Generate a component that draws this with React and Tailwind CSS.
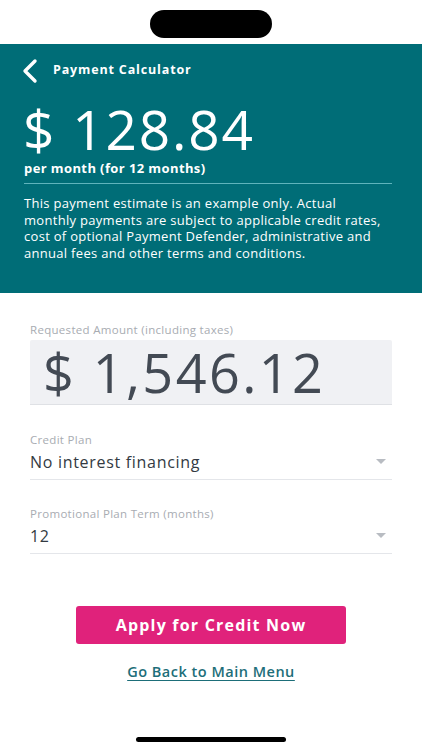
import React from 'react';

function Caret() {
  return (
    <svg width="10" height="6" viewBox="0 0 10 6" className="mr-[6px]">
      <path d="M0 0 L10 0 L5 5 Z" fill="#b8bcc2" />
    </svg>
  );
}

function SelectField({ label, value, mt }) {
  return (
    <div className={mt}>
      <div className="text-[11.5px] text-[#a8acb2] leading-[14px] tracking-[0.3px]">{label}</div>
      <div className="flex items-center justify-between border-b border-[#e4e6ea] h-[33px] pb-[2px]">
        <span className="text-[16px] font-medium text-[#333a42] tracking-[0.7px]">{value}</span>
        <Caret />
      </div>
    </div>
  );
}

export default function App() {
  return (
    <div className="w-[422px] h-[750px] bg-white flex flex-col" style={{ fontFamily: '"Open Sans", sans-serif' }}>
      {/* status area */}
      <div className="h-[44px] flex justify-center pt-[10px]">
        <div className="w-[122px] h-[28px] rounded-full bg-black" />
      </div>

      {/* teal header */}
      <div className="bg-[#006d77] h-[249px] px-[24px] text-white">
        <div className="flex items-center h-[52px] pt-[1px] -ml-[4px]">
          <svg width="20" height="26" viewBox="0 0 20 26" fill="none">
            <path d="M15 3 L5 13 L15 23" stroke="white" strokeWidth="3.4" strokeLinecap="round" strokeLinejoin="round" />
          </svg>
          <span className="ml-[13px] text-[12.5px] font-bold tracking-[0.85px]">Payment Calculator</span>
        </div>
        <div className="text-[55px] leading-[56px] font-normal mt-[5px] -ml-[1px] tracking-[1.8px]">$ 128.84</div>
        <div className="text-[13px] font-bold leading-[18px] mt-[2px] tracking-[0.4px]">per month (for 12 months)</div>
        <div className="h-px bg-[#5fb4bc] mt-[6px] mr-[6px]" />
        <p className="text-[13px] leading-[16.5px] mt-[11px] tracking-[0.3px] whitespace-nowrap">
          This payment estimate is an example only. Actual<br />
          monthly payments are subject to applicable credit rates,<br />
          cost of optional Payment Defender, administrative and<br />
          annual fees and other terms and conditions.
        </p>
      </div>

      {/* form */}
      <div className="px-[30px] pt-[30px]">
        <div className="text-[11.5px] text-[#a8acb2] leading-[14px] tracking-[0.3px]">Requested Amount (including taxes)</div>
        <div className="mt-[3px] h-[65px] bg-[#f0f1f4] border-b border-[#dfe1e5] rounded-t-[2px] flex items-center px-[13px]">
          <span className="text-[54px] leading-[60px] text-[#434a54] tracking-[2.4px]">$ 1,546.12</span>
        </div>

        <SelectField label="Credit Plan" value="No interest financing" mt="mt-[28px]" />
        <SelectField label="Promotional Plan Term (months)" value="12" mt="mt-[27px]" />
      </div>

      <div className="flex flex-col items-center mt-[52px]">
        <button className="w-[270px] h-[38px] bg-[#e0227b] rounded-[3px] text-white text-[16px] font-bold tracking-[1.2px]">
          Apply for Credit Now
        </button>
        <a className="mt-[17px] text-[14.5px] font-semibold text-[#1d6e79] underline underline-offset-[3px] tracking-[0.5px]">
          Go Back to Main Menu
        </a>
      </div>

      <div className="flex-1" />
      <div className="flex justify-center pb-[8px]">
        <div className="w-[150px] h-[5px] rounded-full bg-black" />
      </div>
    </div>
  );
}
